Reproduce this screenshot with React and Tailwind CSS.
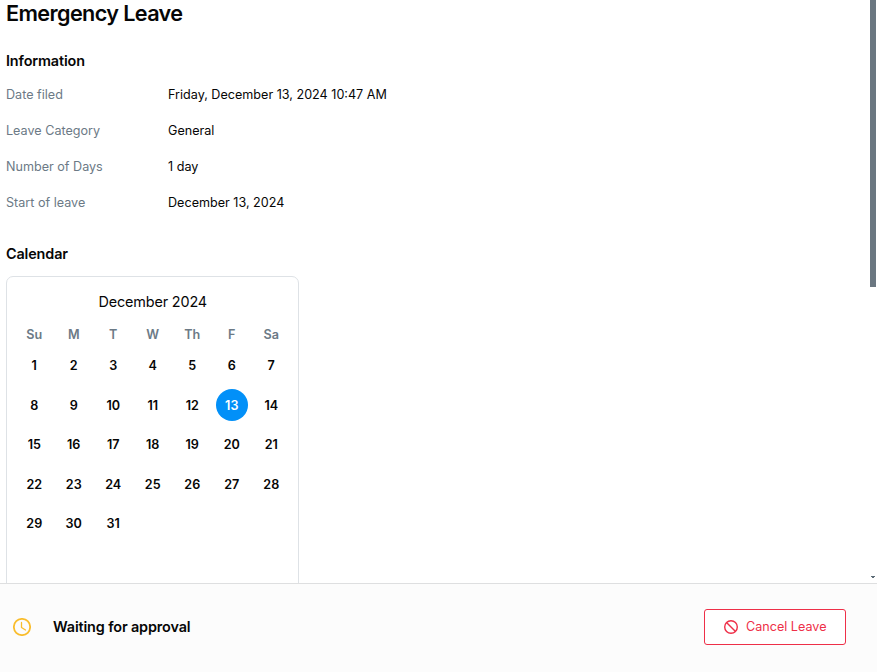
const details = [
  ["Date filed", "Friday, December 13, 2024 10:47 AM"],
  ["Leave Category", "General"],
  ["Number of Days", "1 day"],
  ["Start of leave", "December 13, 2024"],
];
const weekdays = ["Su", "M", "T", "W", "Th", "F", "Sa"];
const days = Array.from({ length: 31 }, (_, i) => i + 1);

function ClockIcon() {
  return (
    <svg viewBox="0 0 18 18" className="size-[18px]" fill="none" stroke="#f9bd2d">
      <circle cx="9" cy="9" r="8.15" strokeWidth="1.75" />
      <path d="M8.5 4.4v5.1l4 2.5" strokeWidth="1.3" strokeLinecap="round" strokeLinejoin="round" />
    </svg>
  );
}

function BanIcon() {
  return (
    <svg viewBox="0 0 14 14" className="size-[14px]" fill="none" stroke="currentColor" strokeWidth="1.4">
      <circle cx="7" cy="7" r="6.3" />
      <path d="M2.5 2.5l9 9" />
    </svg>
  );
}

function Calendar() {
  return (
    <div className="mt-[11px] h-[340px] w-[293px] rounded-[7px] border border-[#dee2e6] pt-[14px] pr-[7px] pl-[7.5px]">
      <div className="text-center text-[14.4px] leading-[22px] tracking-[-0.15px]">December 2024</div>
      <div className="mt-[10px] grid grid-cols-7 text-center text-[12.6px] leading-[24px] font-semibold text-[#6c7a86]">
        {weekdays.map((d) => <div key={d}>{d}</div>)}
      </div>
      <div className="mt-[2px] grid grid-cols-7 auto-rows-[39.5px] justify-items-center text-[12.6px] font-semibold">
        {days.map((d) => (
          <div key={d} className={d === 13 ? "flex size-8 items-center justify-center rounded-full bg-[#0290f8] pt-[3px] text-white" : "flex size-8 items-center justify-center pt-[3px]"}>
            {d}
          </div>
        ))}
      </div>
    </div>
  );
}

export default function App() {
  return (
    <div className="flex h-[672px] w-[877px] flex-col overflow-hidden bg-white font-['Inter',sans-serif] text-[#060606]">
      <div className="flex h-[583px] shrink-0 overflow-hidden">
        <main className="flex-1 pl-[6px]">
          <h1 className="text-[21.6px] leading-[26px] font-semibold tracking-[-0.6px]">Emergency Leave</h1>
          <h2 className="mt-[24px] text-[14.4px] leading-[22px] font-semibold tracking-[-0.13px]">Information</h2>
          <dl className="mt-[5px] text-[12.6px]">
            {details.map(([label, value]) => (
              <div key={label} className="flex h-9 items-center">
                <dt className="w-[162px] text-[#6c7a86]">{label}</dt>
                <dd>{value}</dd>
              </div>
            ))}
          </dl>
          <h2 className="mt-[22px] text-[14.4px] leading-[22px] font-semibold tracking-[-0.13px]">Calendar</h2>
          <Calendar />
        </main>
        <div className="flex w-[7px] flex-col justify-between pb-[4px]">
          <div className="h-[287px] w-[6px] bg-[#6b7781]" />
          <svg viewBox="0 0 6 3" className="h-[3px] w-[6px]" fill="#5d6c77">
            <path d="M1 0h4v1H1zM2 1h2v1H2z" />
          </svg>
        </div>
      </div>
      <footer className="flex h-[89px] shrink-0 items-center border-t border-[#dedfe0] bg-[#fcfcfc] pr-[31px] pb-[2px] pl-[13px]">
        <ClockIcon />
        <span className="ml-[22px] text-[14.4px] leading-[22px] font-semibold tracking-[-0.13px]">Waiting for approval</span>
        <button className="ml-auto flex h-9 w-[142px] items-center justify-center gap-[8.5px] rounded-[3px] border border-[#ee2f48] bg-white text-[12.6px] text-[#ee2f48]">
          <BanIcon />
          Cancel Leave
        </button>
      </footer>
    </div>
  );
}
